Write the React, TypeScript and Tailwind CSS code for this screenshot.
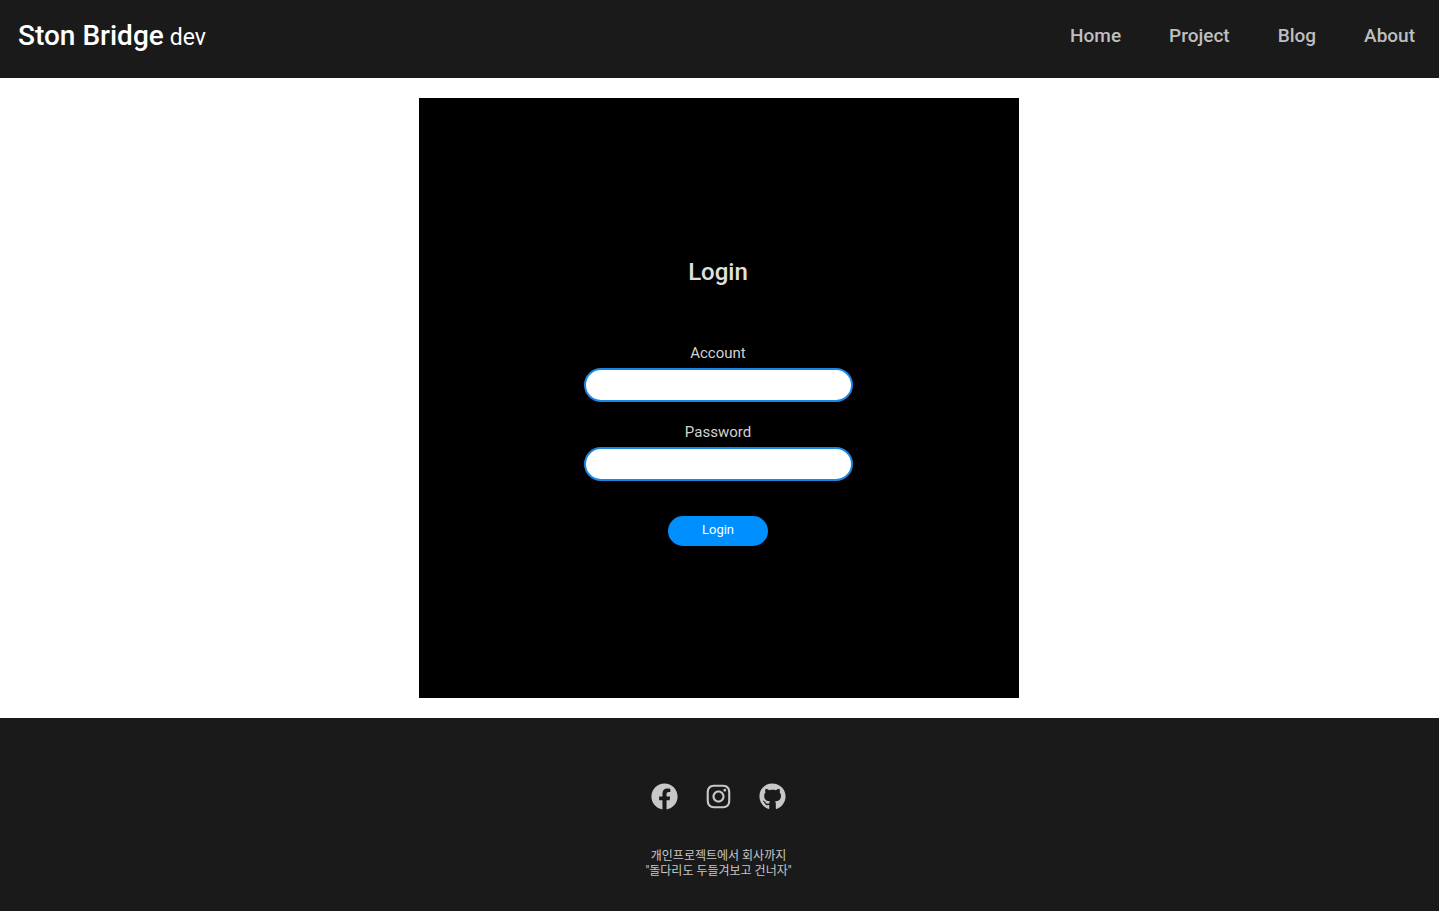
import { FaFacebook, FaGithub, FaInstagram } from "react-icons/fa";

const links = ["Home", "Project", "Blog", "About"];

function Field({ id, label, type }: { id: string; label: string; type: string }) {
  return (
    <div className="flex flex-col items-center">
      <label htmlFor={id} className="pt-0.5 text-[15px] leading-[30px] text-[#d3d3d3]">{label}</label>
      <input id={id} type={type} className="h-[34px] w-[269px] rounded-full border-2 border-[#1a87e6] bg-white px-4 text-black outline-none" />
    </div>
  );
}

export default function App() {
  return (
    <div className="flex min-h-screen flex-col bg-white font-[Roboto,'Noto_Sans_CJK_KR',sans-serif]">
      <header className="flex h-[78px] items-center justify-between bg-[#1a1a1a] px-[18px] pb-1.5">
        <a href="#" className="flex items-baseline gap-1.5 text-white">
          <span className="text-[28px] font-medium">Ston Bridge</span>
          <span className="text-[23px]">dev</span>
        </a>
        <nav className="flex gap-12 pr-1.5">
          {links.map((l) => (
            <a key={l} href="#" className="text-[19px] font-medium text-[#bfbfbf]">{l}</a>
          ))}
        </nav>
      </header>
      <main className="flex justify-center py-5 pr-px">
        <form className="flex h-[600px] w-[600px] flex-col items-center bg-black pt-[154px] pr-0.5">
          <h1 className="text-2xl leading-10 font-medium text-[#e0e0e0]">Login</h1>
          <div className="mt-[44px] flex flex-col gap-[13px]">
            <Field id="account" label="Account" type="text" />
            <Field id="password" label="Password" type="password" />
          </div>
          <button type="button" className="mt-[35px] h-[30px] w-[100px] rounded-full bg-[#008fff] pb-[3px] text-[13px] text-white">Login</button>
        </form>
      </main>
      <footer className="flex grow flex-col items-center bg-[#1a1a1a] pt-[65px] pr-0.5 text-[#c8c8c8]">
        <div className="flex gap-[27px]">
          <a href="#" aria-label="Facebook"><FaFacebook size={27} /></a>
          <a href="#" aria-label="Instagram"><FaInstagram size={27} /></a>
          <a href="#" aria-label="GitHub"><FaGithub size={27} /></a>
        </div>
        <p className="mt-[39px] text-center text-xs leading-[15px]">개인프로젝트에서 회사까지<br />"돌다리도 두들겨보고 건너자"</p>
      </footer>
    </div>
  );
}
